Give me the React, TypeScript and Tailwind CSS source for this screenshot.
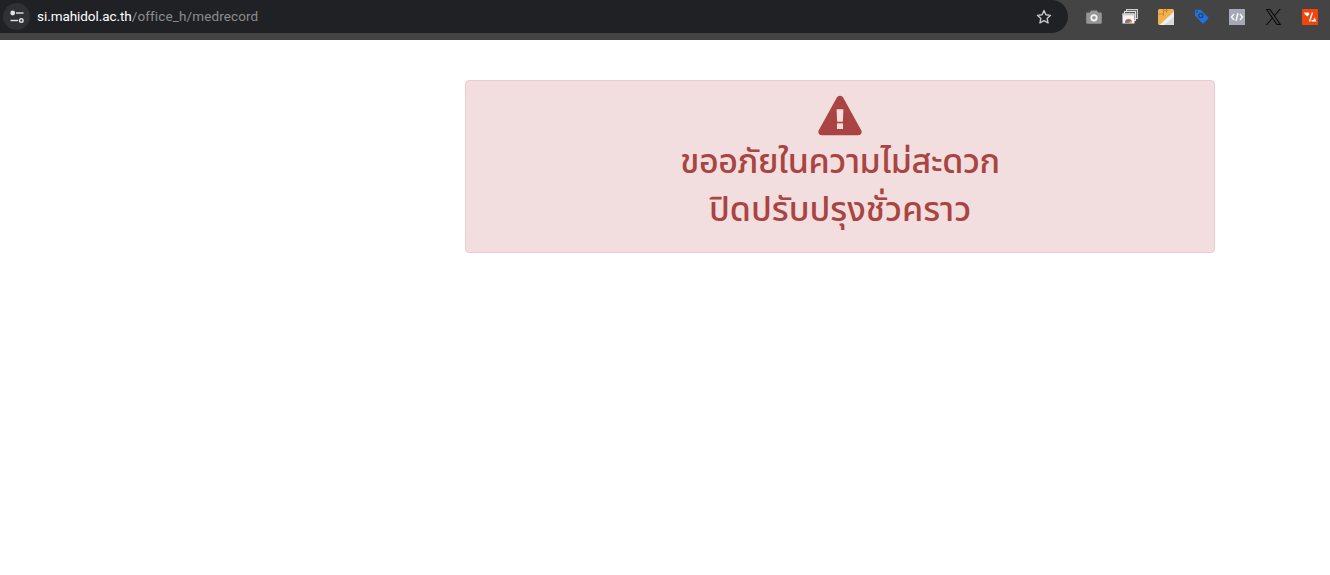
import React from "react";

function Tune() {
  return (
    <svg width="16" height="16" viewBox="0 0 16 16" fill="none" stroke="#e3e3e3" strokeWidth="1.4">
      <circle cx="3.7" cy="4" r="1.7" fill="#e3e3e3" />
      <path d="M7 4h7.5" />
      <circle cx="12.3" cy="11.5" r="1.8" />
      <path d="M1.5 11.5H9" />
    </svg>
  );
}

function Star() {
  return (
    <svg width="16" height="16" viewBox="0 0 16 16" fill="none" stroke="#c7c7c7" strokeWidth="1.4" strokeLinejoin="round">
      <path d="M8 1.6l1.95 4.2 4.55.55-3.35 3.1.9 4.5L8 11.7l-4.05 2.25.9-4.5L1.5 6.35l4.55-.55z" />
    </svg>
  );
}

function Camera() {
  return (
    <svg width="16" height="14" viewBox="0 0 16 14">
      <path d="M5 0.5h6l1.2 2h2.3a1.3 1.3 0 0 1 1.3 1.3v8.6a1.3 1.3 0 0 1-1.3 1.3h-13A1.3 1.3 0 0 1 .2 12.4V3.8a1.3 1.3 0 0 1 1.3-1.3h2.3z" fill="#969696" />
      <circle cx="8" cy="7.8" r="3.6" fill="#f2f2f2" />
      <circle cx="8" cy="7.8" r="1.8" fill="#969696" />
    </svg>
  );
}

function Windows() {
  return (
    <svg width="16" height="15" viewBox="0 0 16 15">
      <rect x="4.5" y="0.5" width="11" height="9" fill="#6a6a6a" stroke="#cfcfcf" strokeWidth="1" />
      <rect x="2.5" y="2.5" width="11" height="9" fill="#5c5c5c" stroke="#dcdcdc" strokeWidth="1" />
      <rect x="0.5" y="4.5" width="12" height="10" fill="#f5f5f5" />
      <rect x="0.5" y="4.5" width="12" height="2" fill="#d0d0d0" />
      <path d="M3 13.5a3.5 3.5 0 0 1 7 0z" fill="#ea4335" />
      <path d="M3 12.4h2.8v1.6H3z" fill="#34a853" />
      <path d="M7.2 12.4H10v1.6H7.2z" fill="#fbbc05" />
      <circle cx="6.5" cy="12.6" r="1.3" fill="#4285f4" />
    </svg>
  );
}

function Notes() {
  return (
    <svg width="16" height="16" viewBox="0 0 16 16">
      <rect width="16" height="16" rx="1.5" fill="#f4b04f" />
      <path d="M16 2.5V15a1 1 0 0 1-1 1H1.5z" fill="#efefef" />
      <path d="M16 8V15a1 1 0 0 1-1 1H6z" fill="#d9d9d9" />
      <path d="M5.5 0v6.5M8.5 0v3.5" stroke="#b9812f" strokeWidth="1" />
      <path d="M0 5h5.5M5.5 1.5h5" stroke="#c98e38" strokeWidth="1" />
    </svg>
  );
}

function Tag() {
  return (
    <svg width="15" height="15" viewBox="0 0 15 15">
      <path d="M1 0.8h5.6l7.6 7.4a1 1 0 0 1 0 1.4l-4.6 4.6a1 1 0 0 1-1.4 0L1 6.6z" fill="#1a73e8" />
      <circle cx="6.8" cy="6.6" r="2.7" fill="#3c3c3c" />
      <circle cx="6.8" cy="6.6" r="1.5" fill="#1a73e8" />
      <circle cx="3" cy="2.8" r="1" fill="#444444" />
    </svg>
  );
}

function Code() {
  return (
    <svg width="16" height="16" viewBox="0 0 16 16" fill="none">
      <rect width="16" height="16" fill="#a4a9b5" />
      <path d="M5 5L2.5 8 5 11M11 5l2.5 3-2.5 3M9 4L7 12" stroke="#f5f5f5" strokeWidth="1.5" />
    </svg>
  );
}

function XLogo() {
  return (
    <svg width="17" height="16" viewBox="0 0 1200 1227">
      <path
        d="M714.163 519.284L1160.89 0H1055.03L667.137 450.887L357.328 0H0L468.492 681.821L0 1226.37H105.866L515.491 750.218L842.672 1226.37H1200L714.137 519.284H714.163ZM569.165 687.828L521.697 619.934L144.011 79.6944H306.615L611.412 515.685L658.88 583.579L1055.08 1150.3H892.476L569.165 687.854V687.828Z"
        fill="#0a0a0a"
      />
    </svg>
  );
}

function Percent() {
  return (
    <svg width="16" height="16" viewBox="0 0 16 16" fill="none">
      <rect width="16" height="16" rx="1" fill="#f4440e" />
      <path d="M2 3.5h4.5l1 1.5-2 2.5L3 5.5" fill="#ffffff" />
      <path d="M10.5 3.5L7.5 12.5" stroke="#ffffff" strokeWidth="1.4" />
      <path d="M9.5 12.5h4.8l-1.6-4-1.2 1.5 .6 1H9.5z" fill="#ffffff" />
    </svg>
  );
}

function Warning() {
  return (
    <svg width="44" height="41" viewBox="0 0 45 41">
      <path
        d="M22.5 0.2c1.4 0 2.5.7 3.2 1.9L44.2 35.6c1.4 2.6-.4 5.2-3.2 5.2H4C1.2 40.8-.6 38.2.8 35.6L19.3 2.1C20 .9 21.1.2 22.5.2z"
        fill="#a94442"
      />
      <path d="M19 14h7l-.6 13h-5.8z" fill="#f2dede" />
      <rect x="19.4" y="28.5" width="6.2" height="5.8" fill="#f2dede" />
    </svg>
  );
}

export default function App() {
  return (
    <div className="min-h-[575px] bg-white font-['Noto_Sans','Liberation_Sans',sans-serif]">
      <div className="flex h-10 items-start bg-[#444444]">
        <div className="flex h-[33px] w-[1068px] items-center rounded-r-[17px] bg-[#202124] pl-[3px] pr-4">
          <div className="flex h-[27px] w-[27px] shrink-0 items-center justify-center rounded-full bg-[#303134]">
            <Tune />
          </div>
          <div className="ml-[7px] flex-1 font-['Roboto',sans-serif] text-[13.5px] text-[#8a8d91]">
            <span className="tracking-[-0.06px] text-white">si.mahidol.ac.th</span>
            <span className="tracking-[0.12px]">/office_h/medrecord</span>
          </div>
          <Star />
        </div>
        <div className="ml-[18px] flex h-[33px] items-center gap-[20px]">
          <Camera />
          <Windows />
          <Notes />
          <Tag />
          <Code />
          <XLogo />
          <Percent />
        </div>
      </div>
      <div className="ml-[465px] mt-10 flex w-[750px] flex-col items-center rounded border border-[#ebccd1] bg-[#f2dede] pt-[14px] pb-[17px] text-[#a94442]">
        <Warning />
        <div className="mt-[3px] text-center text-[34px] font-medium leading-[48px] font-['Noto_Sans_Thai','Noto_Sans','Liberation_Sans',sans-serif]">
          <div className="tracking-[-0.4px]">ขออภัยในความไม่สะดวก</div>
          <div>ปิดปรับปรุงชั่วคราว</div>
        </div>
      </div>
    </div>
  );
}
